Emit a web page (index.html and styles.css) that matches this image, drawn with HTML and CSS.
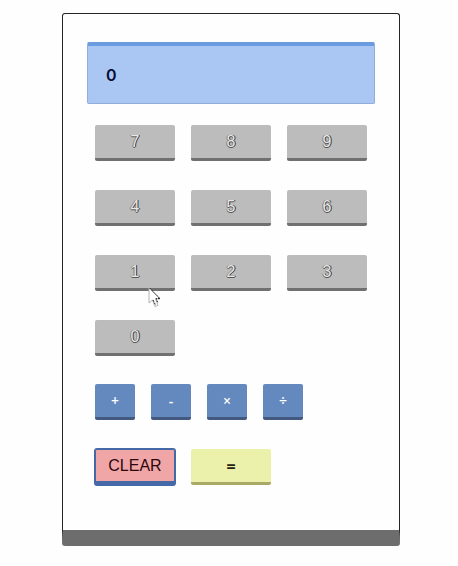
FILE: index.html
```
<!DOCTYPE html>
<html lang="en">
<head>
<meta charset="utf-8">
<meta name="viewport" content="width=device-width, initial-scale=1">
<title>Calculator</title>
<link rel="stylesheet" href="styles.css">
</head>
<body>
<main class="calculator">
  <output class="display">0</output>
  <div class="pad">
    <div class="digits">
      <button class="key digit" type="button">7</button>
      <button class="key digit" type="button">8</button>
      <button class="key digit" type="button">9</button>
      <button class="key digit" type="button">4</button>
      <button class="key digit" type="button">5</button>
      <button class="key digit" type="button">6</button>
      <button class="key digit pointed" type="button">1
        <svg class="pointer" viewBox="0 0 13 21" aria-hidden="true">
          <path d="M1 1V16L4.500 13L7 19.500L10 18.300L7.500 12H12Z" fill="#fff" stroke="#b4b4b4"/>
          <path d="M1.500 1L12 11.500H8L10 16M5 13L7.500 18" fill="none" stroke="#222" stroke-dasharray="2 1"/>
        </svg>
      </button>
      <button class="key digit" type="button">2</button>
      <button class="key digit" type="button">3</button>
      <button class="key digit" type="button">0</button>
    </div>
    <div class="operators">
      <button class="key operator" type="button">+</button>
      <button class="key operator" type="button">-</button>
      <button class="key operator" type="button">×</button>
      <button class="key operator" type="button">÷</button>
    </div>
    <div class="actions">
      <button class="key clear" type="button">CLEAR</button>
      <button class="key equals" type="button">=</button>
    </div>
  </div>
</main>
</body>
</html>
```
FILE: styles.css
```
* {
  box-sizing: border-box;
}

body {
  margin: 0;
  padding: 13px 58px 20px 62px;
  background: #fefefe;
  font-family: "Liberation Sans", Arial, sans-serif;
}

.calculator {
  padding: 28px 24px 45px;
  border: 1px solid #242424;
  border-bottom: 16px solid #6d6d6d;
  border-radius: 3px;
}

.display {
  display: flex;
  align-items: center;
  padding: 15px 18px 13px;
  border: 1px solid #91add9;
  border-top: 4px solid #6c9ce0;
  border-radius: 2px;
  background: #aac6f3;
  color: #050c35;
  font: 600 16px/29px Inter, sans-serif;
}

.pad {
  display: flex;
  flex-direction: column;
  gap: 28px;
  padding: 21px 8px 0;
}

.digits,
.actions {
  display: grid;
  grid-template-columns: repeat(3, 1fr);
  gap: 29px 16px;
}

.actions {
  padding-top: 1px;
}

.operators {
  display: flex;
  gap: 16px;
}

.key {
  height: 36px;
  padding: 0;
  border: 0;
  border-bottom: 3px solid #707070;
  border-radius: 2px;
  font: 16px/32px "Liberation Sans", Arial, sans-serif;
}

.digit {
  background: #bcbcbc;
  color: #e8e8e8;
  text-shadow: 1px 0 #333, 0 1px #555, -1px 0 #888;
}

.pointed {
  position: relative;
}

.pointer {
  position: absolute;
  top: 32px;
  left: 53px;
  width: 13px;
  height: 21px;
}

.operator {
  width: 40px;
  border-bottom-color: #435980;
  background: #6389be;
  color: #fff;
  font: 600 14px/32px "Open Sans", sans-serif;
}

.clear {
  border-bottom-color: #4568a7;
  background: #f0a6a7;
  box-shadow: 0 0 0 1px #4568a7, inset 0 0 0 1px #4568a7;
  color: #2b070b;
}

.equals {
  border-bottom-color: #aaa968;
  background: #ebf1aa;
  color: #22240d;
  font: bold 16px/32px "Open Sans", sans-serif;
}
```
